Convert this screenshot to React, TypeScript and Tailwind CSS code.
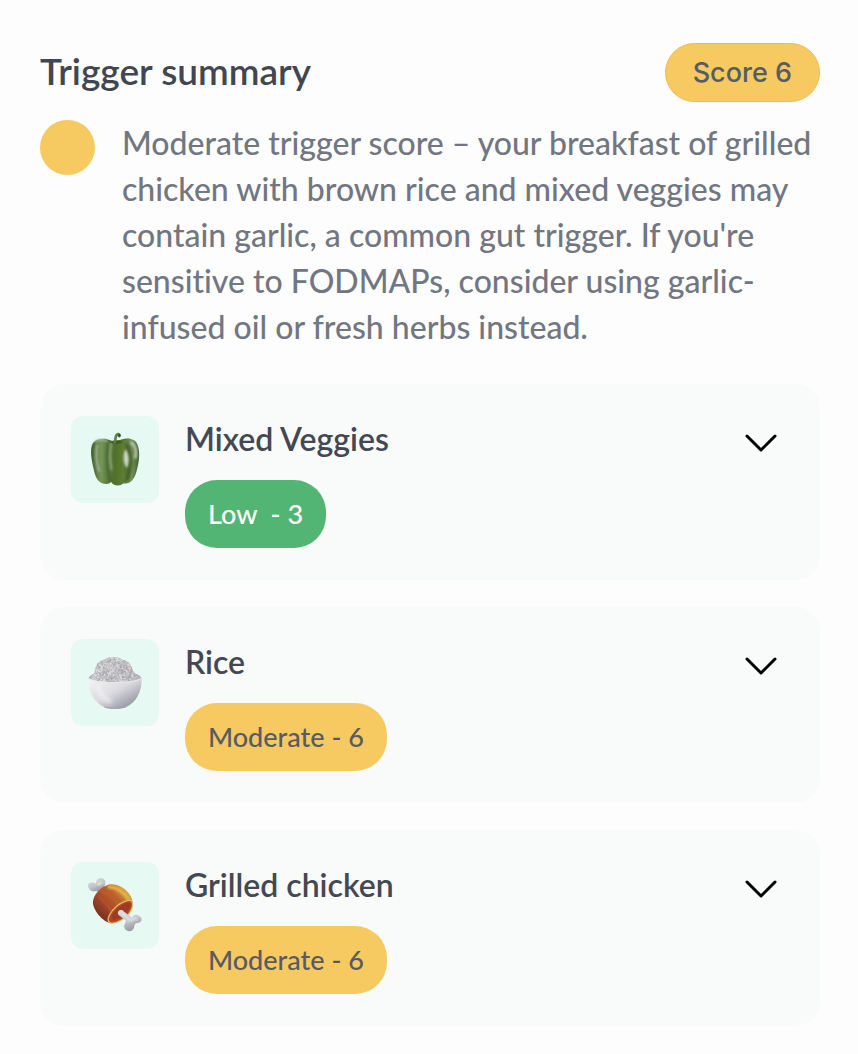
import { useState } from "react";
import type { ReactNode } from "react";

function PepperIcon() {
  return (
    <svg viewBox="33 33 264 264" className="size-full" aria-hidden="true">
      <defs>
        <linearGradient id="pepperLeft" x1="0" x2="1">
          <stop offset="0" stopColor="#3f5e2b" />
          <stop offset="0.45" stopColor="#779659" />
          <stop offset="1" stopColor="#3f5f25" />
        </linearGradient>
        <linearGradient id="pepperMid" x1="0" x2="1">
          <stop offset="0" stopColor="#64864a" />
          <stop offset="0.3" stopColor="#50702b" />
          <stop offset="0.7" stopColor="#5d7d30" />
          <stop offset="1" stopColor="#466427" />
        </linearGradient>
        <linearGradient id="pepperRight" x1="0" x2="1">
          <stop offset="0" stopColor="#4f6f30" />
          <stop offset="0.6" stopColor="#75925a" />
          <stop offset="1" stopColor="#42602f" />
        </linearGradient>
        <filter id="pepperSoft" x="-100%" y="-50%" width="300%" height="200%">
          <feGaussianBlur stdDeviation="4" />
        </filter>
      </defs>
      <path d="M120 104C134 98 148 108 165 110C183 107 196 98 213 103L205 200L125 200Z" fill="#537333" />
      <path d="M151 115C139 99 111 98 98 115C88 132 93 164 100 193C106 223 116 239 139 239C154 239 160 225 160 198C160 165 157 129 151 115Z" fill="url(#pepperLeft)" />
      <path d="M188 111C202 98 223 101 231 115C243 137 239 172 230 202C223 228 209 241 191 237C177 231 177 125 188 111Z" fill="url(#pepperRight)" />
      <path d="M144 120C153 107 184 106 198 117C211 134 216 171 207 207C202 232 192 243 173 244C155 243 147 229 144 198C140 165 138 134 144 120Z" fill="url(#pepperMid)" />
      <path d="M145 120C137 154 143 208 154 232" fill="none" stroke="#314d1c" strokeWidth="3" filter="url(#pepperSoft)" />
      <path d="M202 116C219 148 216 198 202 229" fill="none" stroke="#304b1b" strokeWidth="5" filter="url(#pepperSoft)" />
      <path d="M197 134C209 149 209 172 202 190C191 186 187 150 197 134Z" fill="#ccd6cb" filter="url(#pepperSoft)" />
      <path d="M213 112C228 122 231 143 226 162" fill="none" stroke="#c2c7bd" strokeWidth="8" filter="url(#pepperSoft)" />
      <path d="M104 113C112 103 129 102 141 109" fill="none" stroke="#b0bfa5" strokeWidth="5" filter="url(#pepperSoft)" />
      <path d="M112 119C105 142 109 178 117 202" fill="none" stroke="#a1b591" strokeWidth="7" filter="url(#pepperSoft)" />
      <path d="M154 116C149 144 150 174 155 197" fill="none" stroke="#9bad86" strokeWidth="5" filter="url(#pepperSoft)" />
      <path d="M151 112C158 105 181 105 188 113C178 120 160 119 151 112Z" fill="#405c23" />
      <path d="M164 112C169 105 163 91 174 88C179 87 179 92 178 94" fill="none" stroke="#638143" strokeWidth="8" strokeLinecap="round" />
      <ellipse cx="178" cy="92" rx="4" ry="5" fill="#36551f" />
    </svg>
  );
}

function noise(n: number) {
  const v = Math.sin(n * 127.1) * 43758.5453;
  return v - Math.floor(v);
}

const grains = Array.from({ length: 700 }, (_, i) => ({
  x: 88 + noise(i + 1) * 154,
  y: 80 + noise(i + 1001) * 82,
  turn: noise(i + 2001) * 180,
  tone: Math.floor(noise(i + 3001) * 4),
}));
const grainTones = ["#dededf", "#a7a7aa", "#cdcdd0", "#b8b8bc"];

function RiceIcon() {
  return (
    <svg viewBox="33 27 264 264" className="size-full" aria-hidden="true">
      <defs>
        <linearGradient id="bowlFill" x1="0.1" y1="0.1" x2="0.9" y2="0.9">
          <stop offset="0" stopColor="#f0f0f2" />
          <stop offset="0.45" stopColor="#dcdce0" />
          <stop offset="0.8" stopColor="#aaaab4" />
          <stop offset="1" stopColor="#93939e" />
        </linearGradient>
        <filter id="bowlSoft" x="-100%" y="-50%" width="300%" height="200%">
          <feGaussianBlur stdDeviation="7" />
        </filter>
        <clipPath id="riceClip">
          <path d="M86 148C96 138 104 133 107 113C111 96 127 92 138 87C153 79 174 80 187 90C201 93 213 100 216 115C220 131 234 134 244 147L236 160H95Z" />
        </clipPath>
      </defs>
      <path d="M84 146C88 138 99 132 108 130H222C234 133 243 139 246 147Z" fill="#a7a9ae" />
      <g clipPath="url(#riceClip)">
        <path d="M80 75H250V165H80Z" fill="#bcbcc0" />
        {grains.map((g, i) => (
          <ellipse key={i} cx={g.x} cy={g.y} rx="4" ry="2" fill={grainTones[g.tone]} transform={`rotate(${g.turn} ${g.x} ${g.y})`} />
        ))}
      </g>
      <path d="M84 146C110 162 220 162 246 146C247 186 229 220 199 233C193 240 139 241 132 233C101 219 83 187 84 146Z" fill="url(#bowlFill)" />
      <path d="M85 147C110 163 220 163 245 147" fill="none" stroke="#e8e8ea" strokeWidth="3" />
      <path d="M113 168C120 196 137 213 153 218" fill="none" stroke="#f4f4f6" strokeWidth="10" filter="url(#bowlSoft)" />
      <path d="M133 233C149 239 182 239 198 232" fill="none" stroke="#a0a0a9" strokeWidth="3" />
    </svg>
  );
}

function MeatIcon() {
  return (
    <svg viewBox="33 33 264 264" className="size-full" aria-hidden="true">
      <defs>
        <linearGradient id="meatFill" x1="0.15" y1="0.75" x2="0.8" y2="0.15">
          <stop offset="0" stopColor="#7d3520" />
          <stop offset="0.42" stopColor="#b04d2a" />
          <stop offset="0.7" stopColor="#bb642c" />
          <stop offset="1" stopColor="#d5a044" />
        </linearGradient>
        <linearGradient id="boneFill" x1="0.2" y1="0" x2="0.7" y2="1">
          <stop offset="0" stopColor="#dadddf" />
          <stop offset="0.55" stopColor="#bfc3c7" />
          <stop offset="1" stopColor="#8b8f98" />
        </linearGradient>
        <filter id="meatSoft" x="-50%" y="-50%" width="200%" height="200%">
          <feGaussianBlur stdDeviation="3" />
        </filter>
      </defs>
      <path d="M107 99C107 85 119 78 128 83C138 87 137 100 132 107L119 124L105 121C95 125 85 116 83 105C84 94 98 93 107 99Z" fill="url(#boneFill)" />
      <path d="M111 98C117 103 121 98 125 93" fill="none" stroke="#f2f3f2" strokeWidth="5" filter="url(#meatSoft)" />
      <path d="M139 104C157 95 189 106 206 127C217 140 220 152 217 164C214 190 174 218 149 218C130 215 99 181 98 157C98 133 120 111 139 104Z" fill="url(#meatFill)" />
      <path d="M143 109C169 107 194 126 207 148" fill="none" stroke="#e7b946" strokeWidth="9" filter="url(#meatSoft)" />
      <path d="M126 123C146 131 166 150 177 166M116 140C133 150 148 169 155 184" fill="none" stroke="#c46e35" strokeWidth="3" filter="url(#meatSoft)" />
      <path d="M217 153C222 168 212 190 194 203C178 215 158 222 149 217C137 208 151 183 170 167C188 152 209 145 217 153Z" fill="#ad4928" stroke="#e2ba60" strokeWidth="4" />
      <path d="M210 160C213 173 202 188 188 197C175 206 160 211 156 207C151 198 162 182 177 171C191 160 206 153 210 160Z" fill="#9f3b24" />
      <path d="M175 183C179 177 187 178 192 183L217 203C220 193 229 191 237 196C249 201 248 214 237 217C230 218 224 219 224 226C223 239 215 245 205 242C193 239 189 228 196 218L199 211L179 196C174 193 172 187 175 183Z" fill="url(#boneFill)" />
      <path d="M184 187L209 209C220 214 222 201 232 202" fill="none" stroke="#e5e6e7" strokeWidth="6" filter="url(#meatSoft)" />
      <circle cx="231" cy="209" r="3" fill="#d5c8b5" />
    </svg>
  );
}

type Food = { name: string; label: string; tone: string; icon: ReactNode };

const foods: Food[] = [
  { name: "Mixed Veggies", label: "Low  - 3", tone: "bg-[#53b573] text-white", icon: <PepperIcon /> },
  { name: "Rice", label: "Moderate - 6", tone: "bg-[#f6c961] text-[#575b64]", icon: <RiceIcon /> },
  { name: "Grilled chicken", label: "Moderate - 6", tone: "bg-[#f6c961] text-[#575b64]", icon: <MeatIcon /> },
];

function FoodCard({ food }: { food: Food }) {
  const [open, setOpen] = useState(false);
  return (
    <li className="flex items-start rounded-3xl bg-[#f9fbfa] py-8 pr-[39px] pl-[31px]">
      <div className="h-[87px] w-[88px] shrink-0 overflow-hidden rounded-xl bg-[#e6f9f3]">{food.icon}</div>
      <div className="ml-[26px] flex min-w-0 flex-1 flex-col items-start gap-[18px]">
        <h2 className="text-[32px] leading-[46px] font-semibold text-[#444852]">{food.name}</h2>
        <span className={`rounded-[32px] px-[23px] text-[27px] leading-[68px] font-medium whitespace-pre ${food.tone}`}>{food.label}</span>
      </div>
      <button
        type="button"
        aria-label={`Details for ${food.name}`}
        aria-expanded={open}
        onClick={() => setOpen(!open)}
        className="mt-1 flex size-10 shrink-0 items-center justify-center text-black"
      >
        <svg viewBox="0 0 40 40" className={open ? "size-10 rotate-180" : "size-10"} fill="none" stroke="currentColor" strokeWidth="3" strokeLinecap="round" strokeLinejoin="round" aria-hidden="true">
          <path d="M6 16L20 30L34 16" />
        </svg>
      </button>
    </li>
  );
}

export default function App() {
  return (
    <main className="min-h-screen bg-[#fdfdfd] pt-[43px] pr-[38px] pb-7 pl-10 font-['Lato',sans-serif] [font-variant-ligatures:none]">
      <header className="flex items-center justify-between">
        <h1 className="pb-1 text-[37px] leading-[54px] font-semibold text-[#424650]">Trigger summary</h1>
        <span className="rounded-full border border-[#eebb55] bg-[#f6c961] px-[27px] font-['Inter',sans-serif] text-[27px] leading-[57px] font-medium text-[#575b64]">Score 6</span>
      </header>
      <section className="mt-[18px] flex items-start gap-[27px]">
        <span className="size-[55px] shrink-0 rounded-full bg-[#f6c961]" />
        <p className="min-w-0 flex-1 text-[32px] leading-[46px] font-medium text-[#727681]">
          Moderate trigger score – your breakfast of grilled chicken with brown rice and mixed veggies may contain garlic, a common gut trigger. If you're sensitive to FODMAPs, consider using garlic-infused oil or fresh herbs instead.
        </p>
      </section>
      <ul className="mt-[34px] flex flex-col gap-[27px]">
        {foods.map((food) => (
          <FoodCard key={food.name} food={food} />
        ))}
      </ul>
    </main>
  );
}
